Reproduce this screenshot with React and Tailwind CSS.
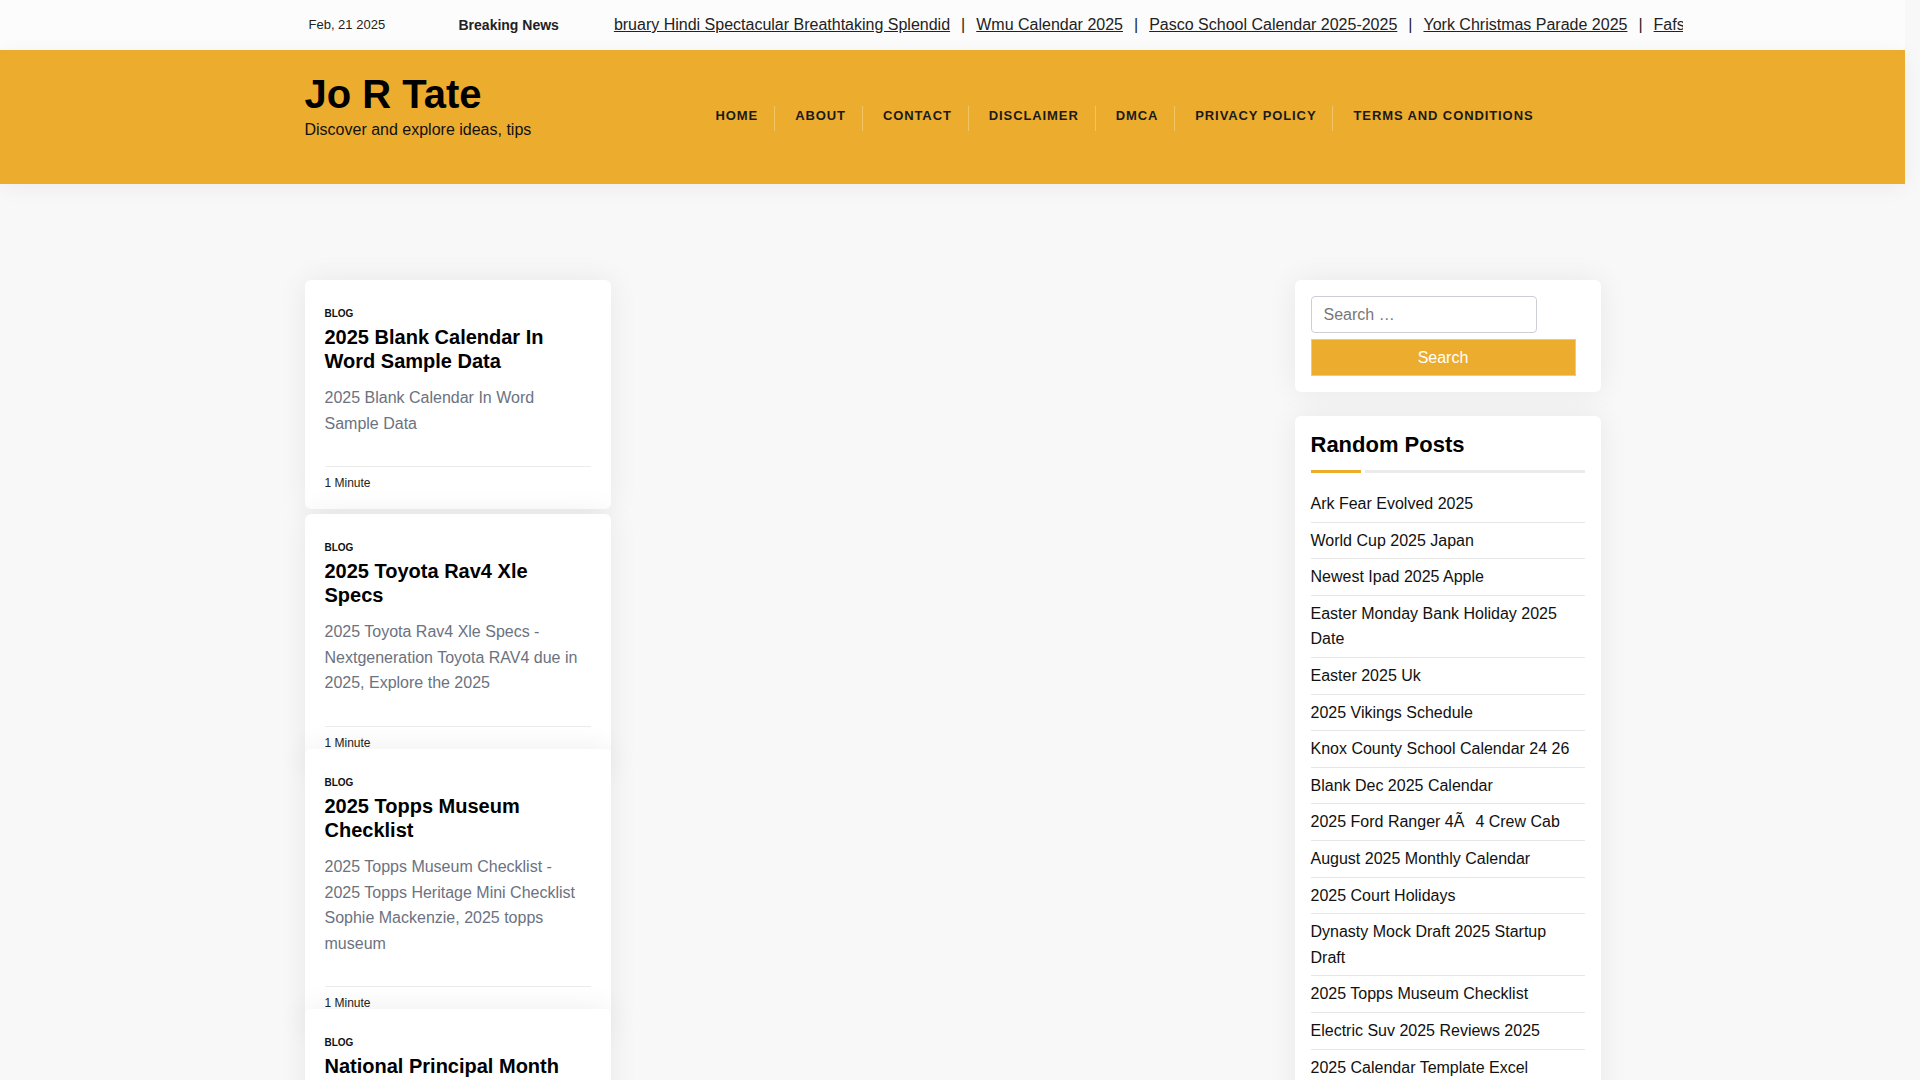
import React from 'react'

const NAV = ['Home', 'About', 'Contact', 'Disclaimer', 'DMCA', 'Privacy Policy', 'Terms and Conditions']

const TICKER = [
  'bruary Hindi Spectacular Breathtaking Splendid',
  'Wmu Calendar 2025',
  'Pasco School Calendar 2025-2025',
  'York Christmas Parade 2025',
  'Fafsa Deadline 2025-2026',
]

const POSTS = [
  {
    title: '2025 Blank Calendar In Word Sample Data',
    excerpt: '2025 Blank Calendar In Word Sample Data',
  },
  {
    title: '2025 Toyota Rav4 Xle Specs',
    excerpt: '2025 Toyota Rav4 Xle Specs - Nextgeneration Toyota RAV4 due in 2025, Explore the 2025',
  },
  {
    title: '2025 Topps Museum Checklist',
    excerpt: '2025 Topps Museum Checklist - 2025 Topps Heritage Mini Checklist Sophie Mackenzie, 2025 topps museum',
  },
  {
    title: 'National Principal Month 2025',
    excerpt: 'National Principal Month 2025 - Celebrate the school leaders who make a difference every day',
  },
]

const RANDOM = [
  'Ark Fear Evolved 2025',
  'World Cup 2025 Japan',
  'Newest Ipad 2025 Apple',
  'Easter Monday Bank Holiday 2025 Date',
  'Easter 2025 Uk',
  '2025 Vikings Schedule',
  'Knox County School Calendar 24 26',
  'Blank Dec 2025 Calendar',
  '2025 Ford Ranger 4Ã\u00974 Crew Cab',
  'August 2025 Monthly Calendar',
  '2025 Court Holidays',
  'Dynasty Mock Draft 2025 Startup Draft',
  '2025 Topps Museum Checklist',
  'Electric Suv 2025 Reviews 2025',
  '2025 Calendar Template Excel',
  'Nfl Week 1 Schedule 2025',
]

function PostCard({ post, index }) {
  const spacing = index === 0 ? '' : index === 1 ? 'mt-[5px]' : '-mt-[20px]'
  return (
    <article className={`relative bg-white rounded-[6px] shadow-[0_0_30px_rgba(0,0,0,0.07)] px-5 pt-[26px] pb-[17px] ${spacing}`}>
      <a href="#" className="block text-[10px] leading-[16px] font-bold uppercase text-[#111]">Blog</a>
      <h2 className="mt-[3px] pr-[4px] text-[20px] leading-[24px] font-bold text-[#000]">
        <a href="#">{post.title}</a>
      </h2>
      <p className="mt-[12px] text-[16px] leading-[25.6px] text-[#6b7280]">{post.excerpt}</p>
      <div className="mt-[30px] border-t border-[#ececec] pt-[7px] text-[12px] leading-[18px] text-[#222]">1 Minute</div>
    </article>
  )
}

export default function App() {
  return (
    <div className="h-screen overflow-y-scroll bg-[#f8f8f8] font-['Liberation_Sans',Arial,sans-serif] text-[#111]">
      <div className="w-[1905px]">
        {/* top bar */}
        <div className="h-[50px] bg-[#fcfcfc]">
          <div className="mx-auto w-[1296px] h-full flex items-center whitespace-nowrap">
            <span className="w-[154px] shrink-0 pl-[4px] text-[13px] text-[#222]">Feb, 21 2025</span>
            <span className="shrink-0 text-[14px] font-bold text-[#222]">Breaking News</span>
            <div className="ml-[53px] w-[1071px] shrink-0 overflow-hidden text-[16px] text-[#222]">
              <div className="pl-[2px] flex items-center">
                {TICKER.map((t, i) => (
                  <React.Fragment key={t}>
                    {i > 0 && <span className="mx-[11px]">|</span>}
                    <a href="#" className="underline">{t}</a>
                  </React.Fragment>
                ))}
              </div>
            </div>
          </div>
        </div>

        {/* header */}
        <header className="relative h-[134px] bg-[#ecac2e] shadow-[0_4px_20px_rgba(0,0,0,0.05)]">
          <div className="mx-auto w-[1296px] pt-[21px] pr-[51px] flex items-start">
            <div>
              <a href="#" className="block text-[40px] leading-[47px] font-bold text-black">Jo R Tate</a>
              <p className="text-[16px] leading-[24px] text-[#111]">Discover and explore ideas, tips</p>
            </div>
            <nav className="ml-auto mt-[35px]">
              <ul className="flex">
                {NAV.map((n, i) => (
                  <li
                    key={n}
                    className={`h-[25px] pl-[20px] pr-[16px] ${i < NAV.length - 1 ? 'border-r border-[#f3c463]' : ''}`}
                  >
                    <a href="#" className="block text-[13px] leading-[19px] font-bold uppercase tracking-[0.9px] text-[#1a1a1a]">{n}</a>
                  </li>
                ))}
              </ul>
            </nav>
          </div>
        </header>

        {/* content */}
        <main className="mx-auto w-[1296px] pt-[96px] pb-10 flex items-start justify-between">
          <div className="w-[306px]">
            {POSTS.map((p, i) => (
              <PostCard key={p.title} post={p} index={i} />
            ))}
          </div>

          <aside className="w-[306px]">
            <div className="bg-white rounded-[6px] shadow-[0_0_30px_rgba(0,0,0,0.07)] p-4">
              <input
                type="search"
                placeholder="Search …"
                className="block w-[226px] h-[37px] rounded-[4px] border border-[#ccd0d6] bg-white px-3 text-[16px] text-[#222] placeholder:text-[#777] outline-none"
              />
              <button className="mt-[6px] block w-[265px] h-[37px] bg-[#ecac2e] border border-[#cccccc] text-[16px] text-white">
                Search
              </button>
            </div>

            <div className="mt-[24px] bg-white rounded-[6px] shadow-[0_0_30px_rgba(0,0,0,0.07)] px-4 pt-[16px] pb-4">
              <h3 className="text-[22px] leading-[26px] font-bold text-black">Random Posts</h3>
              <div className="mt-[12px] flex gap-[4px]">
                <span className="h-[3px] w-[50px] bg-[#ecac2e]"></span>
                <span className="h-[3px] flex-1 bg-[#ebebeb]"></span>
              </div>
              <ul className="mt-[13px]">
                {RANDOM.map((r) => (
                  <li key={r} className="py-[5px] pr-[2px] border-b border-[#e6e6e6] last:border-b-0 text-[16px] leading-[25.6px]">
                    <a href="#" className="text-[#111]">{r}</a>
                  </li>
                ))}
              </ul>
            </div>
          </aside>
        </main>
      </div>
    </div>
  )
}
